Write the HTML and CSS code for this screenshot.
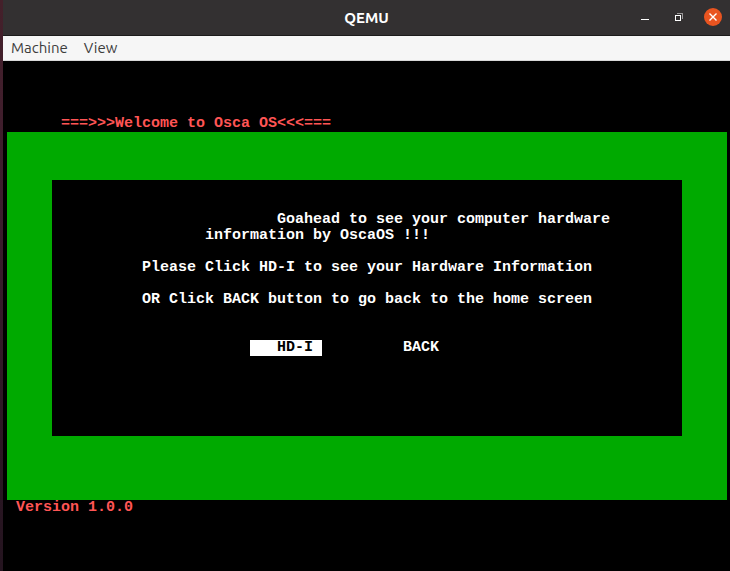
FILE: index.html
```html
<!DOCTYPE html>
<html lang="en">
<head>
<meta charset="utf-8">
<title>QEMU</title>
<link rel="stylesheet" href="styles.css">
</head>
<body>
<div class="window">
  <header class="titlebar">
    <h1 class="title">QEMU</h1>
    <div class="controls">
      <button class="control" type="button" aria-label="Minimize">
        <svg width="18" height="18" viewBox="0 0 18 18" shape-rendering="crispEdges"><path d="M5 11h8v1H5z" fill="#fff"/></svg>
      </button>
      <button class="control" type="button" aria-label="Restore">
        <svg width="18" height="18" viewBox="0 0 18 18" shape-rendering="crispEdges"><path d="M7 5h6v6h-1V6H7z" fill="#999798"/><path d="M5 7h6v6H5zM6 8v4h4V8z" fill="#fff" fill-rule="evenodd"/></svg>
      </button>
      <button class="control close" type="button" aria-label="Close">
        <svg width="18" height="18" viewBox="0 0 18 18"><path d="M5.5 5.5l7 7M12.500 5.500l-7 7" stroke="#fff" stroke-width="1.400"/></svg>
      </button>
    </div>
  </header>
  <nav class="menubar">
    <button class="menu" type="button">Machine</button>
    <button class="menu" type="button">View</button>
  </nav>
  <main class="display">
    <div class="console">
      <p class="banner">===&gt;&gt;&gt;Welcome to Osca OS&lt;&lt;&lt;===</p>
      <section class="backdrop">
        <div class="panel">
          <p class="intro">        Goahead to see your computer hardware
information by OscaOS !!!</p>
          <p class="line">Please Click HD-I to see your Hardware Information</p>
          <p class="line">OR Click BACK button to go back to the home screen</p>
          <div class="choices">
            <button class="choice selected" type="button">HD-I</button>
            <button class="choice" type="button">BACK</button>
          </div>
        </div>
      </section>
      <p class="version">Version 1.0.0</p>
    </div>
  </main>
</div>
</body>
</html>
```
FILE: styles.css
```css
* {
  box-sizing: border-box;
}

body {
  margin: 0;
  padding-left: 3px;
  background: linear-gradient(#44202a, #3d1d2e 35%, #24141f);
}

button {
  margin: 0;
  padding: 0;
  border: 0;
  background: none;
  color: inherit;
  font: inherit;
}

p {
  margin: 0;
}

.window {
  display: flex;
  flex-direction: column;
  min-height: 100vh;
  background: #000;
}

.titlebar {
  display: grid;
  grid-template-columns: 1fr auto 1fr;
  align-items: start;
  height: 36px;
  padding-top: 8px;
  border-bottom: 1px solid #1c1b1b;
  background: #333031;
  color: #fff;
}

.title {
  grid-column: 2;
  margin: 0;
  font: bold 15px/20px "Ubuntu", "Noto Sans", sans-serif;
}

.controls {
  display: flex;
  justify-content: flex-end;
  gap: 16px;
  padding-right: 8px;
}

.control {
  display: block;
  width: 18px;
  height: 18px;
}

.control svg {
  display: block;
}

.close {
  border-radius: 50%;
  background: #e95420;
}

.menubar {
  display: flex;
  gap: 16px;
  height: 25px;
  padding: 0 8px;
  border-bottom: 1px solid #d8d8d8;
  background: #f6f6f6;
  color: #3d3d3d;
  font: 15px/24px "Ubuntu", "Noto Sans", sans-serif;
}

.display {
  display: flex;
  flex: 1;
  align-items: center;
  justify-content: center;
  padding: 0 3px 0 4px;
}

.console {
  flex: 1;
  max-width: 720px;
  color: #fff;
  font: bold 15px/16px "Liberation Mono", monospace;
}

.banner,
.version {
  color: #f55;
}

.banner {
  padding-left: 54px;
}

.version {
  padding-left: 9px;
}

.backdrop {
  padding: 48px 45px 64px;
  background: #0a0;
}

.panel {
  padding: 32px 0 80px 90px;
  background: #000;
}

.intro {
  padding-left: 63px;
  white-space: pre;
}

.line {
  margin-top: 16px;
}

.choices {
  display: flex;
  gap: 54px;
  margin-top: 32px;
  padding-left: 108px;
}

.choice {
  padding: 0 9px 0 27px;
}

.selected {
  background: #fff;
  color: #000;
}
```
